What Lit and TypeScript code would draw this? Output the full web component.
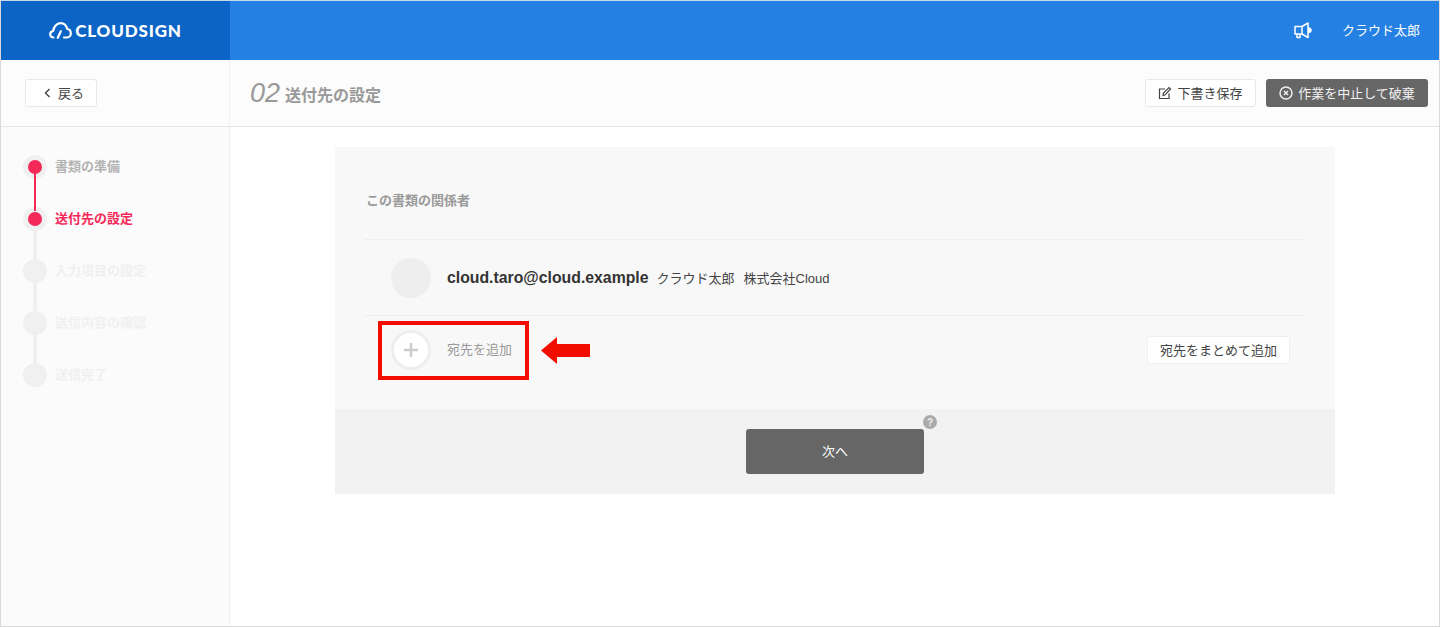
import { LitElement, html, css } from "lit";
import { customElement } from "lit/decorators.js";

@customElement("app-root")
export class AppRoot extends LitElement {
  static styles = css`
    :host { display: block; height: 627px; overflow: hidden; font-family: "Liberation Sans", "Noto Sans CJK JP", sans-serif; color: #333; }
    * { box-sizing: border-box; }
    .frame { position: relative; height: 627px; border: 1px solid #d9d9d9; border-top-color: #c8d8ea; display: flex; flex-direction: column; background: #fff; }
    .top { height: 59px; display: flex; background: #2480e2; flex: none; }
    .brand { width: 229px; background: #0c64c6; display: flex; align-items: center; justify-content: center; gap: 3px; color: #fff; }
    .brand span { font-family: Lato, sans-serif; font-weight: 900; font-size: 17px; letter-spacing: 0.85px; line-height: 20px; }
    .top-right { flex: 1; display: flex; align-items: center; justify-content: flex-end; color: #fff; font-size: 13px; gap: 30px; padding-right: 19px; }
    .top-right span { margin-bottom: 2px; }
    .sub { height: 67px; flex: none; display: flex; background: #fcfcfc; border-bottom: 1px solid #e6e6e6; }
    .sub-left { width: 229px; border-right: 1px solid #f2f2f2; padding: 19px 0 0 24px; }
    .back { width: 72px; height: 28px; border: 1px solid #e8e8e8; border-radius: 3px; background: #fff; display: flex; align-items: center; justify-content: center; gap: 7px; padding-left: 6px; font-size: 13px; color: #444; }
    .back span { margin-bottom: 2px; }
    .sub-main { flex: 1; display: flex; align-items: center; padding: 0 11px 0 20px; }
    .num { font-style: italic; font-size: 27px; color: #999; margin-right: 5px; line-height: 30px; }
    .title { font-size: 16px; font-weight: 700; color: #999; padding-top: 2px; }
    .actions { margin-left: auto; display: flex; gap: 10px; align-self: flex-start; padding-top: 19px; }
    .btn { height: 28px; border-radius: 3px; display: flex; align-items: center; justify-content: center; font-size: 13px; gap: 5px; }
    .btn span { margin-bottom: 2px; }
    .btn.save { width: 111px; background: #fff; border: 1px solid #e8e8e8; color: #444; }
    .btn.stop { width: 162px; background: #666; color: #f2f2f2; }
    .body { flex: 1; display: flex; min-height: 0; }
    .side { width: 229px; background: #fbfbfb; border-right: 1px solid #efefef; padding: 28px 0 0 22px; flex: none; }
    .step { position: relative; height: 52px; display: flex; align-items: flex-start; gap: 8px; font-size: 13px; font-weight: 700; color: #f0f0f0; }
    .step + .step::before { content: ""; position: absolute; left: 10px; top: -36px; width: 4px; height: 40px; background: #f0f0f0; }
    .step.on + .step.on::before { left: 11px; width: 2px; background: #f5285a; z-index: 2; }
    .dot { position: relative; z-index: 1; width: 24px; height: 24px; border-radius: 50%; background: #f0f0f0; display: flex; align-items: center; justify-content: center; flex: none; }
    .on .dot i { width: 14px; height: 14px; border-radius: 50%; background: #f5285a; display: block; }
    .step label { line-height: 24px; }
    .done label { color: #b3b3b3; }
    .cur label { color: #f5285a; }
    .main { flex: 1; padding: 20px 104px 0 105px; }
    .panel { background: #f8f8f8; }
    .panel-body { height: 262px; padding: 0 31px 0 29px; }
    .heading { height: 93px; padding: 44px 0 0 2px; font-size: 13px; font-weight: 700; color: #999; line-height: 20px; border-bottom: 1px solid #efefef; }
    .row { display: flex; align-items: center; height: 76px; padding-left: 27px; border-bottom: 1px solid #efefef; }
    .avatar { width: 40px; height: 40px; border-radius: 50%; background: #eee; flex: none; }
    .email { font-size: 15.8px; font-weight: 700; color: #333; margin-left: 16px; }
    .meta { font-size: 13px; color: #444; margin-left: 8px; }
    .meta + .meta { margin-left: 9px; }
    .add { display: flex; align-items: center; padding: 14px 14px 0 27px; }
    .plus { width: 40px; height: 40px; border-radius: 50%; background: #fff; border: 3px solid #eee; display: flex; align-items: center; justify-content: center; flex: none; }
    .add-label { font-size: 13px; color: #999; margin-left: 16px; padding-bottom: 3px; }
    .bulk { margin-left: auto; width: 143px; height: 28px; padding-bottom: 1px; background: #fff; border: 1px solid #efefef; border-radius: 3px; display: flex; align-items: center; justify-content: center; font-size: 13px; color: #444; }
    .foot { height: 85px; background: #f2f2f2; display: flex; justify-content: center; padding-top: 20px; }
    .next { position: relative; width: 178px; height: 45px; border-radius: 3px; background: #666; color: #fff; font-size: 13px; padding-bottom: 2px; display: flex; align-items: center; justify-content: center; }
    .help { position: absolute; top: -14px; right: -13px; width: 14px; height: 14px; border-radius: 50%; background: #aaa; color: #eee; font-size: 10px; font-weight: 700; display: flex; align-items: center; justify-content: center; }
    .mark { position: absolute; left: 377px; top: 320px; width: 151px; height: 59px; border: 4px solid #f20d00; }
    .arrow { position: absolute; left: 540px; top: 336px; }
  `;

  render() {
    return html`<div class="frame">
      <div class="top">
        <div class="brand">
          <svg width="23" height="17" viewBox="0 0 23 17" fill="none" stroke="#fff" stroke-width="2.200" stroke-linecap="round" stroke-linejoin="round"><path d="M4.500 15.500C2.500 15.500 1.200 14 1.200 12.200C1.200 10.500 2.500 9.200 4.200 9C4.600 4.500 7.800 1.200 11.500 1.200C15 1.200 17.500 3.800 18.200 7C20.300 7.200 21.800 9.200 21.800 11.500C21.800 13.800 20.200 15.500 18 15.500H15"/><path d="M8.800 15.800L11.800 9.200"/></svg>
          <span>CLOUDSIGN</span>
        </div>
        <div class="top-right">
          <svg width="18" height="17" viewBox="0 0 18 17" fill="none" stroke="#fff" stroke-width="1.500" stroke-linejoin="round"><path d="M1 4.500H8V12H1Z"/><path d="M3 12V15.500H6V12"/><path d="M8 4.500L14 1V15.500L8 12"/><path d="M14 6C16 6 17 7 17 8.300S16 10.500 14 10.500" fill="#fff"/></svg>
          <span>クラウド太郎</span>
        </div>
      </div>
      <div class="sub">
        <div class="sub-left">
          <div class="back">
            <svg width="7" height="10" viewBox="0 0 7 10" fill="none" stroke="#444" stroke-width="1.400"><path d="M5.500 1L1.500 5L5.500 9"/></svg>
            <span>戻る</span>
          </div>
        </div>
        <div class="sub-main">
          <span class="num">02</span><span class="title">送付先の設定</span>
          <div class="actions">
            <div class="btn save">
              <svg width="14" height="14" viewBox="0 0 14 14" fill="none" stroke="#444" stroke-width="1.200"><path d="M7 3H1.500V12.500H11V7.500"/><path d="M5 9.500L5.500 7L11 1.500L12.500 3L7.200 8.800Z"/></svg>
              <span>下書き保存</span>
            </div>
            <div class="btn stop">
              <svg width="14" height="14" viewBox="0 0 14 14" fill="none" stroke="#f2f2f2" stroke-width="1.400"><circle cx="7" cy="7" r="6"/><path d="M5 5L9 9M9 5L5 9"/></svg>
              <span>作業を中止して破棄</span>
            </div>
          </div>
        </div>
      </div>
      <div class="body">
        <div class="side">
          <div class="step on done"><span class="dot"><i></i></span><label>書類の準備</label></div>
          <div class="step on cur"><span class="dot"><i></i></span><label>送付先の設定</label></div>
          <div class="step"><span class="dot"></span><label>入力項目の設定</label></div>
          <div class="step"><span class="dot"></span><label>送信内容の確認</label></div>
          <div class="step"><span class="dot"></span><label>送信完了</label></div>
        </div>
        <div class="main">
          <div class="panel">
            <div class="panel-body">
              <div class="heading">この書類の関係者</div>
              <div class="row">
                <span class="avatar"></span>
                <span class="email">cloud.taro@cloud.example</span>
                <span class="meta">クラウド太郎</span>
                <span class="meta">株式会社Cloud</span>
              </div>
              <div class="add">
                <span class="plus"><svg width="14" height="14" viewBox="0 0 14 14" stroke="#ccc" stroke-width="2.500"><path d="M7 0V14M0 7H14"/></svg></span>
                <span class="add-label">宛先を追加</span>
                <div class="bulk">宛先をまとめて追加</div>
              </div>
            </div>
            <div class="foot">
              <div class="next">次へ<span class="help">?</span></div>
            </div>
          </div>
        </div>
      </div>
      <div class="mark"></div>
      <svg class="arrow" width="49" height="27" viewBox="0 0 49 27"><path d="M0 13.500L16 0V7H49V20H16V27Z" fill="#f20d00"/></svg>
    </div>`;
  }
}
